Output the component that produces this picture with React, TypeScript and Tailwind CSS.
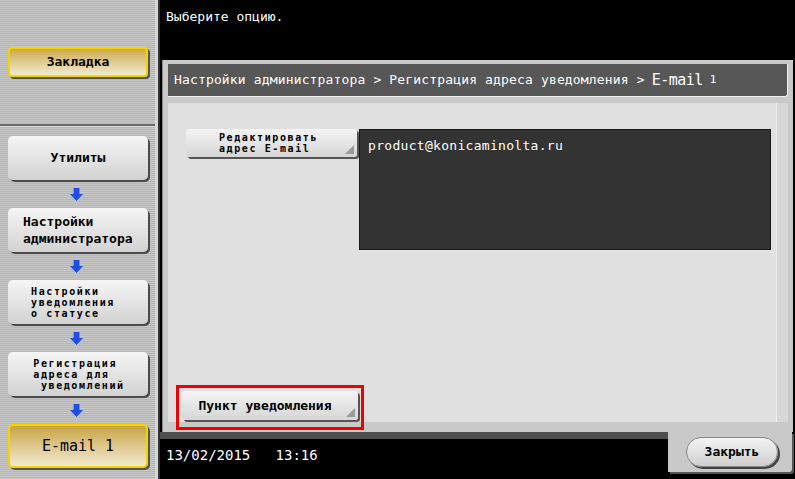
const mono = "font-['DejaVu_Sans_Mono','Liberation_Mono',monospace]";

const Arrow = () => (
  <div className="h-[28px] flex items-center justify-center pr-[2px]">
    <svg width="13" height="13" viewBox="0 0 12 12">
      <path d="M3.3 0h5.4v5.5H12L6 12 0 5.5h3.3z" fill="#1d4fe6" />
    </svg>
  </div>
);

const Corner = () => (
  <svg className="absolute right-[3px] bottom-[3px]" width="9" height="9" viewBox="0 0 9 9">
    <path d="M9 0v9H0z" fill="#9a9a9a" />
  </svg>
);

const SideButton = ({ children, className = "" }: { children: React.ReactNode; className?: string }) => (
  <div
    className={`ml-[8px] w-[140px] h-[44px] rounded-[5px] bg-gradient-to-b from-[#f6f6f6] to-[#d2d2d2] shadow-[2px_2px_0_#4a4a4a] flex items-center text-black font-bold ${mono} ${className}`}
  >
    {children}
  </div>
);

export default function App() {
  return (
    <div className="w-[795px] h-[479px] flex bg-black overflow-hidden">
      {/* sidebar */}
      <div className="w-[160px] h-full flex">
        <div className="flex-1 flex flex-col bg-[repeating-linear-gradient(to_bottom,#c6c6c6_0px,#c6c6c6_1px,#b7b7b7_1px,#b7b7b7_2px)]">
          <div className="h-[126px] border-b-2 border-[#6a6a6a] pt-[47px]">
            <div
              className={`ml-[8px] w-[140px] h-[30px] rounded-[4px] border-2 border-[#f2d400] bg-gradient-to-b from-[#cdaa45] to-[#f2ead0] shadow-[2px_2px_0_#555] flex items-center justify-center text-[13px] font-bold text-black ${mono}`}
            >
              Закладка
            </div>
          </div>
          <div className="pt-[9px] border-t border-[#d8d8d8]">
            <SideButton className="justify-center text-[13px]">Утилиты</SideButton>
            <Arrow />
            <SideButton className="pl-[15px] text-[13px] leading-[17px]">
              <div>
                Настройки
                <br />
                администратора
              </div>
            </SideButton>
            <Arrow />
            <SideButton className="justify-center text-[10px] leading-[11px] tracking-[1.6px]">
              <div className="pr-[10px]">
                Настройки
                <br />
                уведомления
                <br />о статусе
              </div>
            </SideButton>
            <Arrow />
            <SideButton className="justify-center text-[10px] leading-[11px] tracking-[1.6px]">
              <div className="pl-[2px]">
                Регистрация
                <br />
                адреса для
                <br />
                &nbsp;уведомлений
              </div>
            </SideButton>
            <Arrow />
            <div
              className={`ml-[8px] w-[140px] h-[44px] rounded-[5px] border-2 border-[#f2d400] bg-gradient-to-b from-[#c9a43e] to-[#f2ead0] shadow-[2px_2px_0_#555] flex items-center justify-center text-[15px] text-black ${mono}`}
            >
              E-mail 1
            </div>
          </div>
        </div>
        <div className="w-[3px] bg-[#d6d6d6]" />
        <div className="w-[2px] bg-[#303030]" />
      </div>

      {/* main */}
      <div className={`flex-1 flex flex-col ${mono}`}>
        <div className="h-[60px] pl-[6px] pt-[7px] text-white text-[13px]">Выберите опцию.</div>

        <div className="ml-[2px] w-[631px] bg-[#c9c9c9] pt-[4px] px-[5px] pb-[10px] border-l border-[#8a8a8a]">
          <div className="h-[33px] bg-[#575757] border-r border-b border-[#f2f2f2] rounded-br-[3px] flex items-center pl-[6px] text-white text-[13px] tracking-[0.15px]">
            Настройки администратора &gt; Регистрация адреса уведомления &gt; <span className="ml-[7px] text-[15px] tracking-[-0.5px]">E-mail</span>
            <span className="ml-[7px] text-[11px]">1</span>
          </div>
          <div className="mt-[6px] h-[319px] flex">
            <div className="flex-1 bg-[#e0e0e0] flex flex-col justify-between pt-[26px] pl-[18px]">
              <div className="flex gap-[2px]">
                <div className="relative w-[171px] h-[28px] rounded-[3px] bg-gradient-to-b from-[#f4f4f4] to-[#d6d6d6] shadow-[2px_2px_0_#555] flex items-start justify-center pt-[3px] text-[10px] leading-[11px] tracking-[1.6px] font-bold text-black">
                  <div className="pr-[6px]">
                    Редактировать
                    <br />
                    адрес E-mail
                  </div>
                  <Corner />
                </div>
                <div className="w-[412px] h-[121px] bg-[#333333] border border-[#1a1a1a] pl-[8px] pt-[6px] text-white text-[13px] tracking-[0.3px]">
                  product@konicaminolta.ru
                </div>
              </div>
              <div className="-ml-[10px] -mb-[8px] w-[188px] h-[45px] border-[3px] border-[#f00000] p-[3px]">
                <div className="relative h-[29px] w-[176px] rounded-[3px] bg-gradient-to-b from-[#f4f4f4] to-[#d6d6d6] shadow-[2px_2px_0_#555] flex items-center justify-center pr-[10px] text-[13px] font-bold text-black">
                  Пункт уведомления
                  <Corner />
                </div>
              </div>
            </div>
            <div className="w-[12px] bg-[#d7d7d7] border-l border-[#eeeeee]" />
          </div>
        </div>

        <div className="flex-1 flex">
          <div className="flex-1 bg-black border-t-[7px] border-[#4e4e4e] pl-[6px] pt-[6px] text-white text-[14px]">
            13/02/2015&nbsp;&nbsp;&nbsp;13:16
          </div>
          <div className="w-[124px] h-[40px] mr-[3px] bg-[#c9c9c9] rounded-br-[3px] shadow-[2px_2px_0_#555] pl-[18px] pt-[5px]">
            <div className="w-[92px] h-[30px] rounded-full bg-gradient-to-b from-[#f4f4f4] to-[#cfcfcf] shadow-[2px_2px_0_#444] border border-[#888] flex items-center justify-center text-[13px] font-bold text-black">
              Закрыть
            </div>
          </div>
        </div>
      </div>
    </div>
  );
}
